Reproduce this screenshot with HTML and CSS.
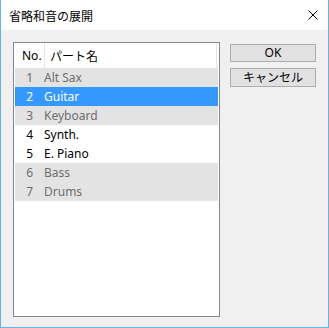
FILE: index.html
```html
<!DOCTYPE html>
<html lang="ja">
<head>
    <meta charset="UTF-8">
    <title>省略和音の展開</title>
    <link rel="stylesheet" href="styles.css">
</head>
<body>
    <!-- ダイアログ -->
    <div class="dialog">
        <div class="titlebar">
            <span class="title">省略和音の展開</span>
            <svg class="close" width="10" height="10" viewBox="0 0 10 10">
                <path d="M0.5 0.5 L9.5 9.5 M9.5 0.5 L0.5 9.5" stroke="#000" stroke-width="1" fill="none"/>
            </svg>
        </div>

        <div class="content">
            <!-- パート一覧 -->
            <div class="listbox">
                <div class="list-head">
                    <div class="head-no">No.</div>
                    <div class="head-name">パート名</div>
                </div>
                <div class="row disabled"><span class="num">1</span><span class="name">Alt Sax</span></div>
                <div class="row selected"><span class="num">2</span><span class="name">Guitar</span></div>
                <div class="row disabled"><span class="num">3</span><span class="name">Keyboard</span></div>
                <div class="row"><span class="num">4</span><span class="name">Synth.</span></div>
                <div class="row"><span class="num">5</span><span class="name">E. Piano</span></div>
                <div class="row disabled"><span class="num">6</span><span class="name">Bass</span></div>
                <div class="row disabled"><span class="num">7</span><span class="name">Drums</span></div>
            </div>

            <!-- ボタン -->
            <div class="buttons">
                <button class="btn btn-ok">OK</button>
                <button class="btn btn-cancel">キャンセル</button>
            </div>
        </div>
    </div>
</body>
</html>
```

FILE: styles.css
```css
/* 全体 */
body {
    margin: 0;
    font-family: "Noto Sans", "Noto Sans CJK JP", sans-serif;
    font-size: 12px;
    color: #000;
    background: #fff;
}

.dialog {
    width: 329px;
    height: 328px;
    box-sizing: border-box;
    border: 1px solid #62b2ee;
    border-top: 0;
    display: flex;
    flex-direction: column;
}

/* タイトルバー */
.titlebar {
    height: 30px;
    flex: none;
    display: flex;
    align-items: center;
    justify-content: space-between;
    padding: 0 10px 0 8px;
    background: #fff;
}

.title {
    font-family: "Noto Sans CJK JP", sans-serif;
    font-size: 12px;
    line-height: 1;
    margin-top: 1px;
}

.close {
    display: block;
    margin-top: 0;
}

/* 本体 */
.content {
    flex: 1;
    display: flex;
    align-items: flex-start;
    gap: 10px;
    padding: 12px 11px 10px 12px;
    background: #f0f0f0;
}

.listbox {
    width: 207px;
    height: 275px;
    box-sizing: border-box;
    border: 1px solid #828790;
    background: #fff;
}

.list-head {
    display: flex;
    height: 25px;
    align-items: stretch;
}

.head-no {
    width: 22px;
    padding-left: 8px;
    border-right: 1px solid #e5e5e5;
    display: flex;
    align-items: center;
}

.head-name {
    width: 166px;
    padding-left: 5px;
    border-right: 1px solid #e5e5e5;
    display: flex;
    align-items: center;
    font-family: "Noto Sans CJK JP", sans-serif;
}

.row {
    display: flex;
    align-items: center;
    height: 19px;
    margin: 0 1px;
}

.row .num {
    width: 18px;
    padding-right: 11px;
    text-align: right;
}

.row.disabled {
    background: #e3e3e3;
    color: #6d6d6d;
}

.row.selected {
    background: #3399ff;
    color: #fff;
}

/* ボタン */
.buttons {
    display: flex;
    flex-direction: column;
    gap: 6px;
    padding-top: 2px;
}

.btn {
    width: 86px;
    height: 18px;
    margin: 0;
    padding: 0;
    border: 1px solid #adadad;
    background: #e1e1e1;
    font-family: "Noto Sans", "Noto Sans CJK JP", sans-serif;
    font-size: 12px;
    line-height: 1;
    color: #000;
}

.btn-cancel {
    height: 19px;
}
```
